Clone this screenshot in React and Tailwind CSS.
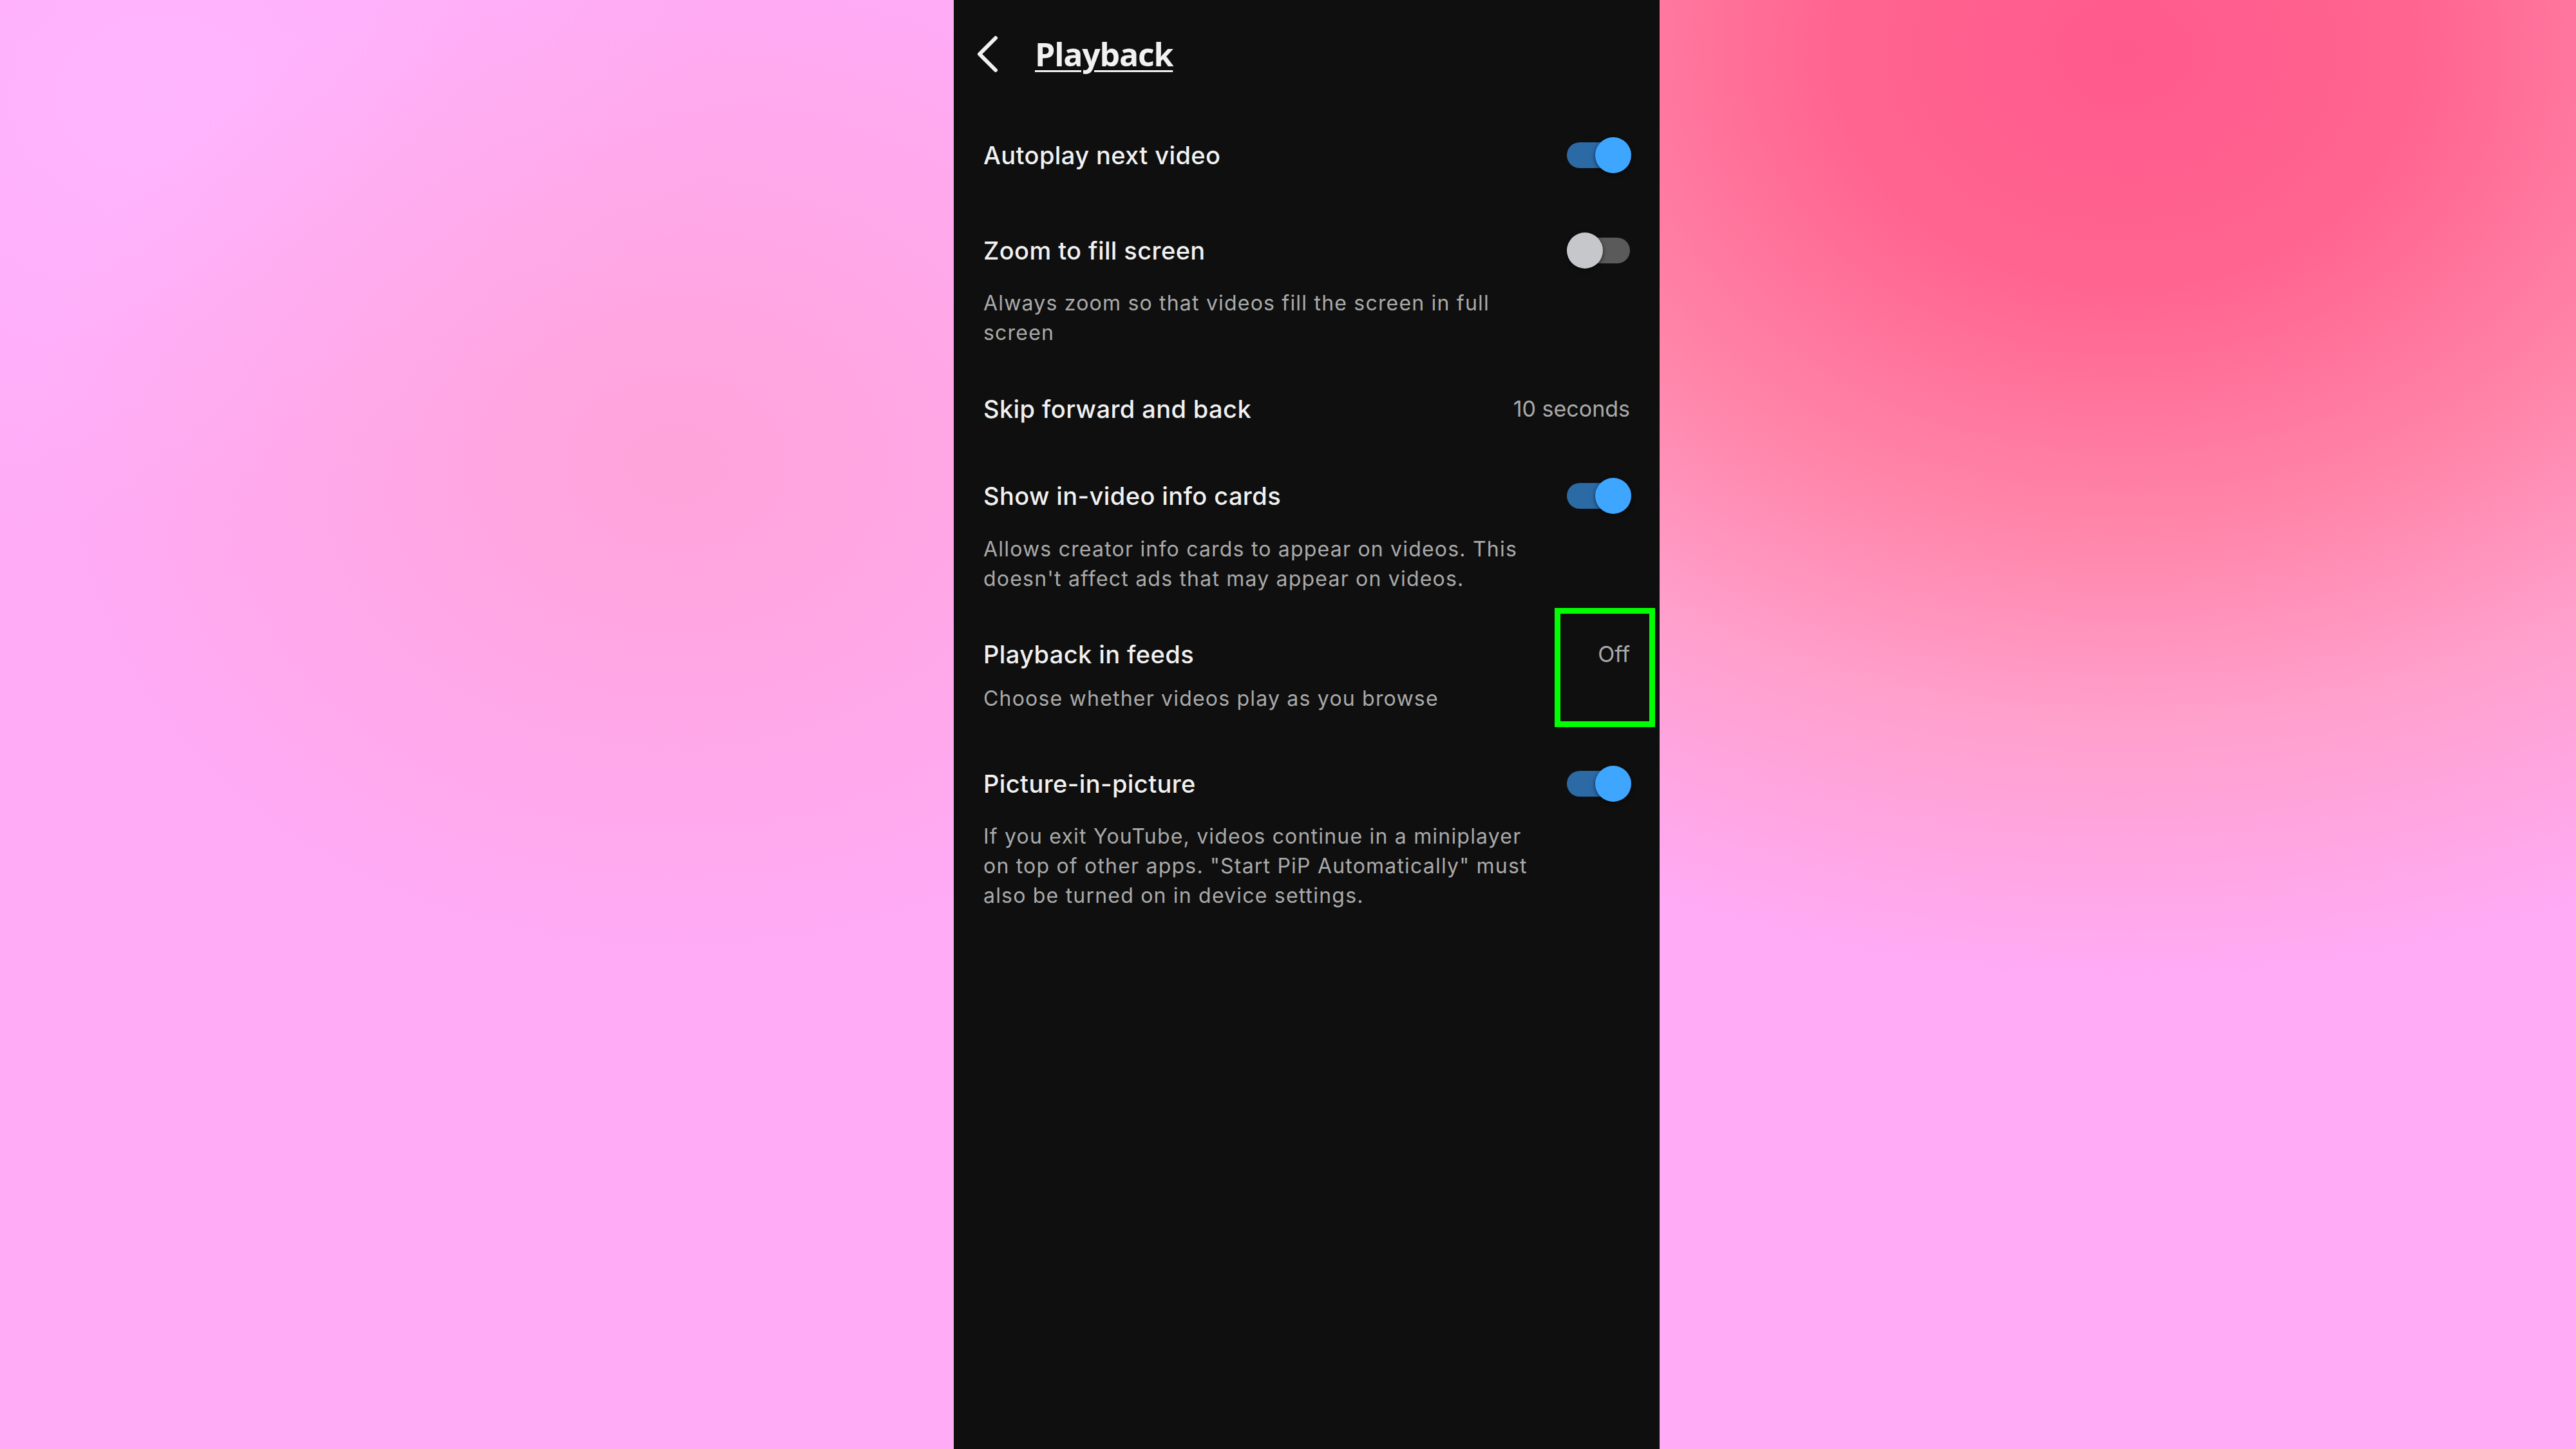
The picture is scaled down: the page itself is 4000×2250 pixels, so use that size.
import React from "react";

function Toggle({ on }) {
  return (
    <div className="relative w-[100px] h-[56px] shrink-0">
      <div
        className={
          on
            ? "absolute left-0 right-[2px] top-[8px] h-[40px] rounded-full bg-[#2c6aa6]"
            : "absolute left-0 right-[2px] top-[8px] h-[40px] rounded-full bg-[#5a5a5a]"
        }
      />
      <div
        className={
          on
            ? "absolute right-0 top-0 w-[56px] h-[56px] rounded-full bg-[#3ea6ff] shadow-[0_2px_6px_rgba(0,0,0,0.6)]"
            : "absolute left-0 top-0 w-[56px] h-[56px] rounded-full bg-[#c5c7cb] shadow-[0_2px_6px_rgba(0,0,0,0.6)]"
        }
      />
    </div>
  );
}

function Title({ children }) {
  return (
    <div className="text-[38px] leading-[48px] font-medium tracking-[0.4px] text-[#f1f1f1] whitespace-nowrap">
      {children}
    </div>
  );
}

function Desc({ lines, className }) {
  return (
    <div className={"text-[32px] leading-[46px] tracking-[1.2px] text-[#aaaaaa] whitespace-nowrap " + className}>
      {lines.map((l, i) => (
        <div key={i}>{l}</div>
      ))}
    </div>
  );
}

function Value({ children }) {
  return (
    <div className="text-[34px] leading-[46px] text-[#aaaaaa] whitespace-nowrap pr-[2px]">
      {children}
    </div>
  );
}

export default function App() {
  return (
    <div
      className="w-[4000px] h-[2250px] overflow-hidden flex pl-[1481px] bg-[#ffabf6] bg-[image:radial-gradient(ellipse_1800px_1450px_at_3300px_80px,#ff5a8c_0%,#ff6490_25%,#ff84a8_50%,#ffa0cc_72%,rgba(255,171,246,0)_100%),radial-gradient(ellipse_1000px_800px_at_1050px_720px,rgba(255,162,212,0.85)_0%,rgba(255,171,246,0)_100%),radial-gradient(ellipse_900px_700px_at_250px_150px,rgba(255,182,255,0.9)_0%,rgba(255,171,246,0)_100%)]"
      style={{ fontFamily: "Inter, Roboto, 'Noto Sans', sans-serif" }}
    >
      <div className="relative w-[1096px] h-full bg-[#0f0f0f] shrink-0 pl-[46px] pr-[44px] flex flex-col">
        {/* header */}
        <div className="flex items-center h-[168px] -ml-[11px]">
          <svg width="36" height="58" viewBox="0 0 36 58" className="shrink-0">
            <polyline
              points="30,4 5,29 30,54"
              fill="none"
              stroke="#f1f1f1"
              strokeWidth="6"
              strokeLinecap="round"
              strokeLinejoin="round"
            />
          </svg>
          <div
            className="ml-[55px] text-[50px] leading-[50px] font-bold text-[#f1f1f1] underline decoration-[3px] underline-offset-[6px] tracking-[-1.2px]"
            style={{ fontFamily: "'Open Sans', 'Noto Sans', sans-serif" }}
          >
            Playback
          </div>
        </div>

        {/* Autoplay */}
        <div className="mt-[45px] flex items-center justify-between h-[56px]">
          <Title>Autoplay next video</Title>
          <Toggle on />
        </div>

        {/* Zoom to fill screen */}
        <div className="mt-[92px] flex items-center justify-between h-[56px]">
          <Title>Zoom to fill screen</Title>
          <Toggle on={false} />
        </div>
        <Desc
          className="mt-[31px]"
          lines={["Always zoom so that videos fill the screen in full", "screen"]}
        />

        {/* Skip forward */}
        <div className="mt-[67px] flex items-center justify-between h-[56px]">
          <Title>Skip forward and back</Title>
          <Value>10 seconds</Value>
        </div>

        {/* Show in-video info cards */}
        <div className="mt-[79px] flex items-center justify-between h-[56px]">
          <Title>Show in-video info cards</Title>
          <Toggle on />
        </div>
        <Desc
          className="mt-[32px]"
          lines={[
            "Allows creator info cards to appear on videos. This",
            "doesn't affect ads that may appear on videos.",
          ]}
        />

        {/* Playback in feeds */}
        <div className="mt-[66px] flex items-center justify-between h-[56px]">
          <Title>Playback in feeds</Title>
          <Value>Off</Value>
        </div>
        <Desc className="mt-[18px]" lines={["Choose whether videos play as you browse"]} />

        {/* Picture-in-picture */}
        <div className="mt-[81px] flex items-center justify-between h-[56px]">
          <Title>Picture-in-picture</Title>
          <Toggle on />
        </div>
        <Desc
          className="mt-[31px]"
          lines={[
            "If you exit YouTube, videos continue in a miniplayer",
            'on top of other apps. "Start PiP Automatically" must',
            "also be turned on in device settings.",
          ]}
        />

        {/* highlight box */}
        <div className="absolute left-[933px] top-[944px] w-[156px] h-[185px] border-[9px] border-[#00ff00]" />
      </div>
    </div>
  );
}
